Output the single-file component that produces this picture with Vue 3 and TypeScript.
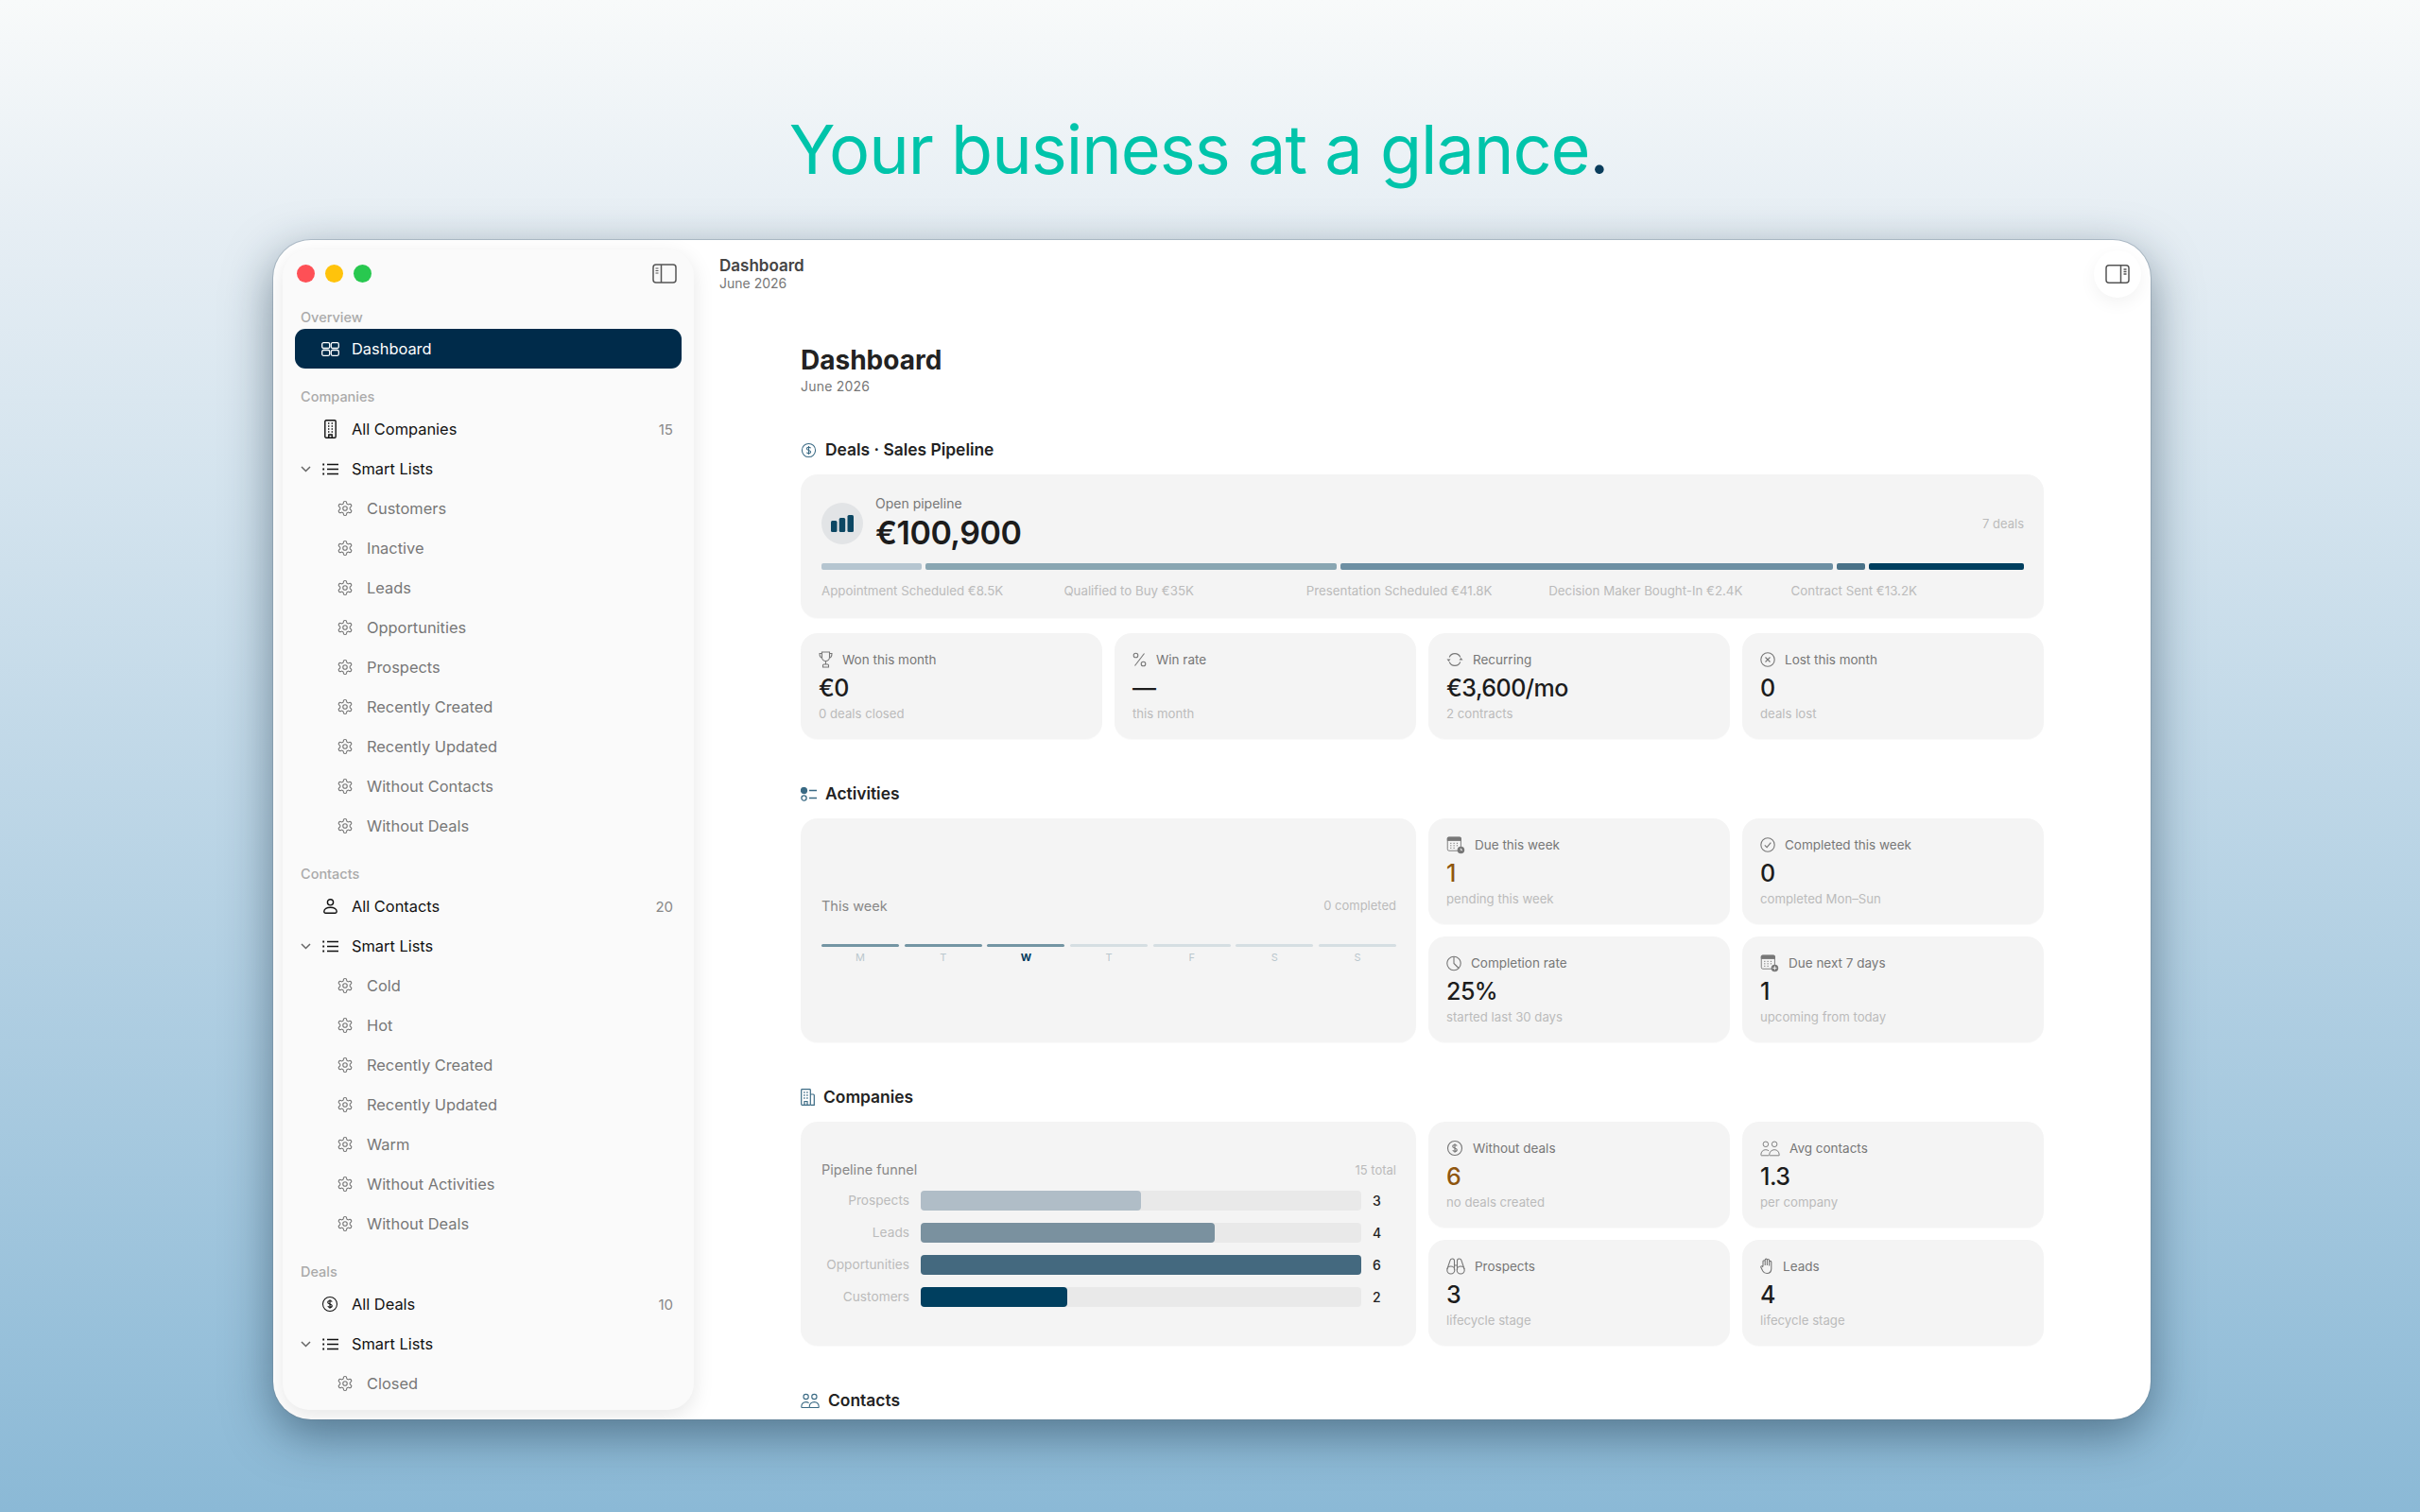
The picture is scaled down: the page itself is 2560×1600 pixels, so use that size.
<script setup lang="ts">
interface Icon { w: number; h: number; vb: string; body: string }

const gearPath = 'M12.22 2h-.44a2 2 0 0 0-2 2v.18a2 2 0 0 1-1 1.73l-.43.25a2 2 0 0 1-2 0l-.15-.08a2 2 0 0 0-2.73.73l-.22.38a2 2 0 0 0 .73 2.73l.15.1a2 2 0 0 1 1 1.72v.51a2 2 0 0 1-1 1.74l-.15.09a2 2 0 0 0-.73 2.73l.22.38a2 2 0 0 0 2.73.73l.15-.08a2 2 0 0 1 2 0l.43.25a2 2 0 0 1 1 1.73V20a2 2 0 0 0 2 2h.44a2 2 0 0 0 2-2v-.18a2 2 0 0 1 1-1.73l.43-.25a2 2 0 0 1 2 0l.15.08a2 2 0 0 0 2.73-.73l.22-.39a2 2 0 0 0-.73-2.73l-.15-.08a2 2 0 0 1-1-1.74v-.5a2 2 0 0 1 1-1.74l.15-.09a2 2 0 0 0 .73-2.73l-.22-.38a2 2 0 0 0-2.73-.73l-.15.08a2 2 0 0 1-2 0l-.43-.25a2 2 0 0 1-1-1.73V4a2 2 0 0 0-2-2z'

const dollarBody = '<circle cx="12" cy="12" r="10"/><path d="M15 8.8c-.5-1-1.600-1.500-3-1.500-1.700 0-3 .9-3 2.300 0 3.100 6 1.600 6 4.700 0 1.400-1.300 2.300-3 2.300-1.400 0-2.500-.5-3-1.500M12 5.800v12.400" stroke-width="1.500"/>'
const usersBody = '<circle cx="7" cy="5" r="3.300"/><circle cx="18" cy="5" r="3.300"/><path d="M1 18.500c0-4 2.500-6.500 6-6.500 1.500 0 2.800.5 3.800 1.300M24 18.500c0-4-2.500-6.500-6-6.500-3.500 0-6.500 2.500-6.500 6.500 0 .5.300.8.8.8h11.400c.5 0 .3-.3.300-.8zM1 18.500c0 .5.300.8.8.8H11"/>'
const calendarBase = '<rect x="1.500" y="2.500" width="17" height="17" rx="2"/><path d="M1.500 3.500a1 1 0 0 1 1-1h15a1 1 0 0 1 1 1v3h-17z" fill="currentColor"/><path d="M5 10h1.500M9 10h1.500M13 10h1.500M5 13h1.500M9 13h1.500M13 13h1.500M5 16h1.500M9 16h1.500" stroke-width="1.200"/>'

const icons: Record<string, Icon> = {
  grid: { w: 19, h: 15, vb: '0 0 19 15', body: '<rect x=".7" y=".7" width="8" height="5.800" rx="1.500"/><rect x="10.300" y=".7" width="8" height="5.800" rx="1.500"/><rect x=".7" y="8.500" width="8" height="5.800" rx="1.500"/><rect x="10.300" y="8.500" width="8" height="5.800" rx="1.500"/>' },
  building: { w: 13, h: 20, vb: '0 0 13 20', body: '<rect x=".8" y=".8" width="11.400" height="18.400" rx="1.200"/><path d="M4 4h1.400M7.600 4H9M4 7h1.400M7.600 7H9M4 10h1.400M7.600 10H9M4 13h1.400M7.600 13H9" stroke-width="1.500"/><path d="M4.800 19v-3h3.400v3"/>' },
  list: { w: 17, h: 13, vb: '0 0 17 13', body: '<path d="M5 1.500h12M5 6.500h12M5 11.500h12"/><path d="M.3 1.500h1.800M.3 6.500h1.800M.3 11.500h1.800" stroke-width="2"/>' },
  person: { w: 15, h: 16, vb: '0 0 15 16', body: '<circle cx="7.500" cy="3.800" r="3.100"/><path d="M.8 13.500c0-2.600 2.900-4.300 6.700-4.300s6.700 1.700 6.700 4.300c0 1-.6 1.700-1.600 1.700H2.400c-1 0-1.600-.7-1.600-1.700z"/>' },
  dollar: { w: 18, h: 18, vb: '0 0 24 24', body: dollarBody },
  gear: { w: 18, h: 18, vb: '0 0 24 24', body: `<path d="${gearPath}"/><circle cx="12" cy="12" r="3"/>` },
  chevron: { w: 11, h: 7, vb: '0 0 11 7', body: '<path d="M1 1l4.500 4.500L10 1"/>' },
  trophy: { w: 15, h: 18, vb: '0 0 15 18', body: '<path d="M3.500 1h8v5.500a4 4 0 0 1-8 0zM3.500 2.500H1c0 3 1 4.500 3 5M11.500 2.500H14c0 3-1 4.500-3 5M7.500 10.500v3.500M4.500 17h6v-2a1 1 0 0 0-1-1h-4a1 1 0 0 0-1 1z"/>' },
  percent: { w: 15, h: 16, vb: '0 0 15 16', body: '<path d="M12.500 1.500L2.500 14.500"/><circle cx="3.500" cy="3.500" r="2.300"/><circle cx="11.500" cy="12.500" r="2.300"/>' },
  refresh: { w: 18, h: 16, vb: '0 0 18 16', body: '<path d="M3.200 5.500A6.300 6.300 0 0 1 14.800 5.500M14.800 10.500A6.300 6.300 0 0 1 3.200 10.500"/><path d="M.5 7.500h4l-2 2.500zM13.500 8.500h4l-2-2.500z" fill="currentColor" stroke="none"/>' },
  xcircle: { w: 16, h: 16, vb: '0 0 16 16', body: '<circle cx="8" cy="8" r="7.200"/><path d="M5.500 5.500l5 5M10.500 5.500l-5 5"/>' },
  caldue: { w: 20, h: 20, vb: '0 0 24 24', body: `${calendarBase}<circle cx="18.500" cy="18.500" r="4.500" fill="currentColor" stroke="none"/><path d="M18.500 16.500v2.200h1.800" stroke="#f4f4f4"/>` },
  calnext: { w: 20, h: 20, vb: '0 0 24 24', body: `${calendarBase}<circle cx="18.500" cy="18.500" r="4.500" fill="currentColor" stroke="none"/><path d="M18.500 16v5M16 18.500h5" stroke="#f4f4f4"/>` },
  check: { w: 16, h: 16, vb: '0 0 16 16', body: '<circle cx="8" cy="8" r="7.200"/><path d="M4.800 8.300l2.300 2.400 4.200-5"/>' },
  pie: { w: 16, h: 17, vb: '0 0 16 17', body: '<circle cx="8" cy="8.500" r="7.200"/><path d="M8 1.300v7.200l5 5"/>' },
  users: { w: 21, h: 18, vb: '0 0 25 20', body: usersBody },
  binoculars: { w: 20, h: 18, vb: '0 0 20 18', body: '<circle cx="4.800" cy="13" r="4"/><circle cx="15.200" cy="13" r="4"/><path d="M.9 12L4 3a2 2 0 0 1 4.500.5V13M19.100 12L16 3a2 2 0 0 0-4.500.5V13M8.500 8h3"/>' },
  hand: { w: 14, h: 18, vb: '0 0 14 18', body: '<path d="M3 9V3.800a1.100 1.100 0 0 1 2.200 0V8M5.200 8V2.200a1.100 1.100 0 0 1 2.200 0V8M7.400 8V2.600a1.100 1.100 0 0 1 2.200 0V8.500M9.600 8.500V4.500a1.100 1.100 0 0 1 2.200 0V11.500c0 3-1.900 5-4.800 5-2.300 0-3.400-1-4.200-2.500L.9 10.200c-.6-1.200.9-2 1.600-1L3 10"/>' },
  tasks: { w: 17, h: 15, vb: '0 0 17 15', body: '<circle cx="3.500" cy="3.500" r="3" fill="currentColor"/><circle cx="3.500" cy="11.500" r="2.600"/><path d="M9 3.500h8M9 11.500h8"/>' },
  office: { w: 15, h: 18, vb: '0 0 15 18', body: '<rect x=".7" y=".7" width="9.600" height="16.600" rx=".8"/><path d="M10.300 6h3a1 1 0 0 1 1 1v10.300h-4"/><path d="M3.200 4h1.400M6.200 4h1.400M3.200 7h1.400M6.200 7h1.400M3.200 10h1.400M6.200 10h1.400" stroke-width="1.400"/><path d="M4 17v-3.500h3V17"/>' },
}

interface Row { label: string; icon?: string; count?: number; kind: 'top' | 'smart' | 'sub' }

const smart = (items: string[]): Row[] => [
  { label: 'Smart Lists', icon: 'list', kind: 'smart' },
  ...items.map((label): Row => ({ label, icon: 'gear', kind: 'sub' })),
]

const groups: { title: string; rows: Row[] }[] = [
  {
    title: 'Companies',
    rows: [
      { label: 'All Companies', icon: 'building', count: 15, kind: 'top' },
      ...smart(['Customers', 'Inactive', 'Leads', 'Opportunities', 'Prospects', 'Recently Created', 'Recently Updated', 'Without Contacts', 'Without Deals']),
    ],
  },
  {
    title: 'Contacts',
    rows: [
      { label: 'All Contacts', icon: 'person', count: 20, kind: 'top' },
      ...smart(['Cold', 'Hot', 'Recently Created', 'Recently Updated', 'Warm', 'Without Activities', 'Without Deals']),
    ],
  },
  {
    title: 'Deals',
    rows: [
      { label: 'All Deals', icon: 'dollar', count: 10, kind: 'top' },
      ...smart(['Closed']),
    ],
  },
]

interface Stat { icon: string; label: string; value: string; sub: string; warn?: boolean }

const dealStats: Stat[] = [
  { icon: 'trophy', label: 'Won this month', value: '€0', sub: '0 deals closed' },
  { icon: 'percent', label: 'Win rate', value: '—', sub: 'this month' },
  { icon: 'refresh', label: 'Recurring', value: '€3,600/mo', sub: '2 contracts' },
  { icon: 'xcircle', label: 'Lost this month', value: '0', sub: 'deals lost' },
]

const activityStats: Stat[] = [
  { icon: 'caldue', label: 'Due this week', value: '1', sub: 'pending this week', warn: true },
  { icon: 'check', label: 'Completed this week', value: '0', sub: 'completed Mon–Sun' },
  { icon: 'pie', label: 'Completion rate', value: '25%', sub: 'started last 30 days' },
  { icon: 'calnext', label: 'Due next 7 days', value: '1', sub: 'upcoming from today' },
]

const companyStats: Stat[] = [
  { icon: 'dollar', label: 'Without deals', value: '6', sub: 'no deals created', warn: true },
  { icon: 'users', label: 'Avg contacts', value: '1.3', sub: 'per company' },
  { icon: 'binoculars', label: 'Prospects', value: '3', sub: 'lifecycle stage' },
  { icon: 'hand', label: 'Leads', value: '4', sub: 'lifecycle stage' },
]

const pipeline = [
  { label: 'Appointment Scheduled €8.5K', amount: 8.5, color: '#b5c5d0' },
  { label: 'Qualified to Buy €35K', amount: 35, color: '#89a6b2' },
  { label: 'Presentation Scheduled €41.8K', amount: 41.8, color: '#6d8fa3' },
  { label: 'Decision Maker Bought-In €2.4K', amount: 2.4, color: '#4a7288' },
  { label: 'Contract Sent €13.2K', amount: 13.2, color: '#003f5f' },
]

const week = [
  { day: 'M', past: true },
  { day: 'T', past: true },
  { day: 'W', past: true, today: true },
  { day: 'T' },
  { day: 'F' },
  { day: 'S' },
  { day: 'S' },
]

const funnel = [
  { label: 'Prospects', count: 3, color: '#b0bdc7' },
  { label: 'Leads', count: 4, color: '#7a919f' },
  { label: 'Opportunities', count: 6, color: '#44697f' },
  { label: 'Customers', count: 2, color: '#003f5f' },
]
</script>

<template>
  <div class="page">
    <h1 class="headline">Your business at a glance<span class="dot">.</span></h1>

    <div class="window">
      <aside class="sidebar">
        <div class="side-top">
          <div class="lights">
            <span class="light red"></span>
            <span class="light yellow"></span>
            <span class="light green"></span>
          </div>
          <svg class="panel-icon" width="26" height="21" viewBox="0 0 26 21" fill="none" stroke="currentColor" stroke-width="1.500">
            <rect x="1" y="1" width="24" height="19" rx="3" />
            <path d="M9.500 1v19" />
            <path d="M3.500 5h3M3.500 7.500h3M3.500 10h3" stroke-width="1.200" />
          </svg>
        </div>

        <div class="side-label first">Overview</div>
        <div class="row active">
          <span class="chev-slot"></span>
          <span class="icon-slot">
            <svg :width="icons.grid.w" :height="icons.grid.h" :viewBox="icons.grid.vb" fill="none" stroke="currentColor" stroke-width="1.300" v-html="icons.grid.body"></svg>
          </span>
          <span>Dashboard</span>
        </div>

        <template v-for="g in groups" :key="g.title">
          <div class="side-label">{{ g.title }}</div>
          <div v-for="r in g.rows" :key="r.label" class="row" :class="r.kind">
            <template v-if="r.kind === 'sub'">
              <svg class="gear" width="18" height="18" viewBox="0 0 24 24" fill="none" stroke="currentColor" stroke-width="1.500" v-html="icons.gear.body"></svg>
              <span>{{ r.label }}</span>
            </template>
            <template v-else>
              <span class="chev-slot">
                <svg v-if="r.kind === 'smart'" class="chev" width="11" height="7" viewBox="0 0 11 7" fill="none" stroke="currentColor" stroke-width="1.500" v-html="icons.chevron.body"></svg>
              </span>
              <span class="icon-slot">
                <svg :width="icons[r.icon!].w" :height="icons[r.icon!].h" :viewBox="icons[r.icon!].vb" fill="none" stroke="currentColor" stroke-width="1.400" v-html="icons[r.icon!].body"></svg>
              </span>
              <span>{{ r.label }}</span>
              <span v-if="r.count" class="count">{{ r.count }}</span>
            </template>
          </div>
        </template>
      </aside>

      <main class="main">
        <div class="main-top">
          <div class="top-title">Dashboard</div>
          <div class="top-sub">June 2026</div>
        </div>

        <div class="inspector">
          <svg width="26" height="20" viewBox="0 0 26 20" fill="none" stroke="currentColor" stroke-width="1.500">
            <rect x="1" y=".8" width="24" height="18.400" rx="3" />
            <path d="M16.500 1v18" />
            <path d="M19.500 5h3M19.500 7.500h3M19.500 10h3" stroke-width="1.300" />
          </svg>
        </div>

        <div class="content">
          <h2 class="page-title">Dashboard</h2>
          <div class="page-sub">June 2026</div>

          <section class="section">
            <h3 class="sec-head">
              <svg width="17" height="17" viewBox="0 0 24 24" fill="none" stroke="currentColor" stroke-width="1.500" v-html="icons.dollar.body"></svg>
              Deals · Sales Pipeline
            </h3>
            <div class="card pipeline">
              <div class="pipe-top">
                <span class="pipe-badge">
                  <svg width="24" height="18" viewBox="0 0 24 18" fill="#0c4763">
                    <rect x="0" y="6" width="6.500" height="12" rx="1.500" />
                    <rect x="8.700" y="3" width="6.500" height="15" rx="1.500" />
                    <rect x="17.500" y="0" width="6.500" height="18" rx="1.500" />
                  </svg>
                </span>
                <div class="pipe-text">
                  <div class="pipe-label">Open pipeline</div>
                  <div class="pipe-value">€100,900</div>
                </div>
                <span class="pipe-deals">7 deals</span>
              </div>
              <div class="pipe-bar">
                <span v-for="p in pipeline" :key="p.label" class="seg" :style="{ flexGrow: p.amount, background: p.color }"></span>
              </div>
              <div class="pipe-legend">
                <span v-for="p in pipeline" :key="p.label">{{ p.label }}</span>
              </div>
            </div>
            <div class="stats-row">
              <div v-for="s in dealStats" :key="s.label" class="card stat">
                <div class="stat-label">
                  <svg :width="icons[s.icon].w" :height="icons[s.icon].h" :viewBox="icons[s.icon].vb" fill="none" stroke="currentColor" stroke-width="1.100" v-html="icons[s.icon].body"></svg>
                  {{ s.label }}
                </div>
                <div class="stat-value">{{ s.value }}</div>
                <div class="stat-sub">{{ s.sub }}</div>
              </div>
            </div>
          </section>

          <section class="section">
            <h3 class="sec-head">
              <svg width="17" height="15" viewBox="0 0 17 15" fill="none" stroke="currentColor" stroke-width="1.300" v-html="icons.tasks.body"></svg>
              Activities
            </h3>
            <div class="split">
              <div class="card panel">
                <div class="panel-head">
                  <span class="panel-title">This week</span>
                  <span class="panel-note">0 completed</span>
                </div>
                <div class="week">
                  <div v-for="(d, i) in week" :key="i" class="day" :class="{ today: d.today }">
                    <span class="day-bar" :class="{ past: d.past }"></span>
                    <span class="day-name">{{ d.day }}</span>
                  </div>
                </div>
              </div>
              <div v-for="s in activityStats" :key="s.label" class="card stat">
                <div class="stat-label">
                  <svg :width="icons[s.icon].w" :height="icons[s.icon].h" :viewBox="icons[s.icon].vb" fill="none" stroke="currentColor" stroke-width="1.100" v-html="icons[s.icon].body"></svg>
                  {{ s.label }}
                </div>
                <div class="stat-value" :class="{ warn: s.warn }">{{ s.value }}</div>
                <div class="stat-sub">{{ s.sub }}</div>
              </div>
            </div>
          </section>

          <section class="section">
            <h3 class="sec-head">
              <svg width="15" height="18" viewBox="0 0 15 18" fill="none" stroke="currentColor" stroke-width="1.200" v-html="icons.office.body"></svg>
              Companies
            </h3>
            <div class="split">
              <div class="card panel">
                <div class="panel-head funnel-head">
                  <span class="panel-title">Pipeline funnel</span>
                  <span class="panel-note">15 total</span>
                </div>
                <div class="funnel">
                  <div v-for="f in funnel" :key="f.label" class="funnel-row">
                    <span class="funnel-label">{{ f.label }}</span>
                    <span class="track">
                      <span class="fill" :style="{ width: (f.count / 6) * 100 + '%', background: f.color }"></span>
                    </span>
                    <span class="funnel-count">{{ f.count }}</span>
                  </div>
                </div>
              </div>
              <div v-for="s in companyStats" :key="s.label" class="card stat">
                <div class="stat-label">
                  <svg :width="icons[s.icon].w" :height="icons[s.icon].h" :viewBox="icons[s.icon].vb" fill="none" stroke="currentColor" :stroke-width="s.icon === 'dollar' ? 1.500 : 1.100" v-html="icons[s.icon].body"></svg>
                  {{ s.label }}
                </div>
                <div class="stat-value" :class="{ warn: s.warn }">{{ s.value }}</div>
                <div class="stat-sub">{{ s.sub }}</div>
              </div>
            </div>
          </section>

          <section class="section">
            <h3 class="sec-head">
              <svg width="20" height="16" viewBox="0 0 25 20" fill="none" stroke="currentColor" stroke-width="1.400" v-html="icons.users.body"></svg>
              Contacts
            </h3>
          </section>
        </div>
      </main>
    </div>
  </div>
</template>

<style>
html,
body {
  margin: 0;
  background: #8bb9d6;
}
</style>

<style scoped>
.page {
  width: 2560px;
  height: 1600px;
  overflow: hidden;
  box-sizing: border-box;
  padding-left: 289px;
  background: linear-gradient(180deg, #f8fafa 0%, #e6eef4 15%, #8bb9d6 100%);
  font-family: Inter, "Noto Sans", sans-serif;
}

.headline {
  width: 1986px;
  height: 254px;
  margin: 0;
  box-sizing: border-box;
  padding: 112px 28px 0 0;
  text-align: center;
  font-size: 72px;
  line-height: 92px;
  font-weight: 400;
  letter-spacing: -1px;
  color: #00c4aa;
}

.dot {
  color: #0a3d5c;
}

.window {
  position: relative;
  display: flex;
  width: 1986px;
  height: 1248px;
  overflow: hidden;
  border-radius: 40px;
  background: #fff;
  box-shadow: 0 0 0 1px rgba(110, 130, 145, 0.35), 0 16px 50px rgba(20, 45, 65, 0.5);
}

.sidebar {
  flex: none;
  width: 435px;
  height: 1228px;
  margin: 10px 0 10px 10px;
  box-sizing: border-box;
  padding: 0 13px;
  overflow: hidden;
  border-radius: 28px;
  background: #fafafa;
  box-shadow: 0 6px 22px rgba(0, 0, 0, 0.1);
}

.side-top {
  display: flex;
  align-items: center;
  justify-content: space-between;
  height: 50px;
  padding: 0 5px 0 2px;
}

.lights {
  display: flex;
  gap: 11px;
}

.light {
  width: 19px;
  height: 19px;
  border-radius: 50%;
}

.red { background: #fe5056; }
.yellow { background: #ffc30b; }
.green { background: #28c84f; }

.panel-icon {
  color: #555;
}

.side-label {
  height: 18px;
  margin-top: 21px;
  margin-bottom: 4px;
  padding-left: 6px;
  font-size: 14.500px;
  line-height: 18px;
  font-weight: 500;
  color: #aaa;
}

.side-label.first {
  margin-top: 13px;
  margin-bottom: 3px;
}

.row {
  display: flex;
  align-items: center;
  height: 42px;
  font-size: 16.400px;
  color: #111;
}

.row.active {
  border-radius: 11px;
  background: #002b4a;
  color: #fff;
}

.chev-slot {
  display: flex;
  justify-content: center;
  flex: none;
  width: 22px;
}

.chev {
  color: #666;
}

.icon-slot {
  display: flex;
  justify-content: center;
  align-items: center;
  flex: none;
  width: 30px;
  margin-right: 8px;
}

.row.sub {
  padding-left: 44px;
  color: #777;
}

.gear {
  flex: none;
  margin-right: 14px;
}

.count {
  margin-left: auto;
  padding-right: 9px;
  font-size: 15px;
  color: #888;
}

.main {
  flex: 1;
  min-width: 0;
}

.main-top {
  padding: 17px 0 0 27px;
}

.top-title {
  font-size: 17px;
  line-height: 20px;
  font-weight: 600;
  color: #444;
}

.top-sub {
  font-size: 14px;
  line-height: 18px;
  color: #777;
}

.inspector {
  position: absolute;
  top: 11px;
  right: 10px;
  display: flex;
  align-items: center;
  justify-content: center;
  width: 50px;
  height: 50px;
  border-radius: 50%;
  background: #fff;
  color: #555;
  box-shadow: 0 6px 18px rgba(0, 0, 0, 0.05);
}

.content {
  width: 1315px;
  margin-left: 113px;
}

.page-title {
  margin: 54px 0 0;
  font-size: 28px;
  line-height: 36px;
  font-weight: 700;
  color: #222;
}

.page-sub {
  margin-top: 1px;
  font-size: 14px;
  letter-spacing: 0.2px;
  line-height: 18px;
  color: #777;
}

.section {
  margin-top: 48px;
}

.sec-head {
  display: flex;
  align-items: center;
  gap: 9px;
  height: 20px;
  margin: 0 0 16px;
  font-size: 17.400px;
  line-height: 20px;
  font-weight: 600;
  color: #222;
}

.sec-head svg {
  flex: none;
  color: #3a6a84;
}

.card {
  box-sizing: border-box;
  border-radius: 18px;
  background: #f4f4f4;
  box-shadow: 0 1px 1px rgba(0, 0, 0, 0.025);
}

.pipeline {
  height: 152px;
  padding: 23px 21px 0 22px;
}

.pipe-top {
  display: flex;
  align-items: center;
  height: 57px;
}

.pipe-badge {
  display: flex;
  align-items: center;
  justify-content: center;
  flex: none;
  width: 44px;
  height: 44px;
  margin-right: 13px;
  border-radius: 50%;
  background: #e2e4e6;
}

.pipe-label {
  font-size: 14px;
  line-height: 16px;
  color: #777;
}

.pipe-value {
  margin-top: 5px;
  font-size: 34px;
  letter-spacing: -0.500px;
  line-height: 36px;
  font-weight: 600;
  color: #1c1c1c;
}

.pipe-deals {
  margin-left: auto;
  font-size: 13px;
  color: #bbb;
}

.pipe-bar {
  display: flex;
  gap: 4px;
  height: 7px;
  margin-top: 14px;
}

.seg {
  flex: 1 1 0;
  border-radius: 2px;
}

.pipe-legend {
  display: grid;
  grid-template-columns: repeat(5, 1fr);
  gap: 10px;
  margin-top: 14px;
  font-size: 13.300px;
  line-height: 16px;
  color: #bbb;
  white-space: nowrap;
}

.stats-row {
  display: grid;
  grid-template-columns: repeat(4, 1fr);
  gap: 13px;
  margin-top: 16px;
}

.stat {
  height: 112px;
  padding: 19px 19px 0;
}

.stat-label {
  display: flex;
  align-items: center;
  gap: 10px;
  height: 18px;
  font-size: 13.500px;
  line-height: 18px;
  color: #777;
}

.stat-label svg {
  flex: none;
}

.stat-value {
  margin-top: 5px;
  font-size: 25px;
  letter-spacing: -0.500px;
  line-height: 32px;
  font-weight: 500;
  color: #1c1c1c;
}

.stat-value.warn {
  color: #8f560e;
}

.stat-sub {
  margin-top: 3px;
  font-size: 13.200px;
  line-height: 16px;
  color: #bbb;
}

.split {
  display: grid;
  grid-template-columns: repeat(4, 1fr);
  grid-template-rows: 112px 112px;
  gap: 13px;
}

.panel {
  grid-column: 1 / span 2;
  grid-row: 1 / span 2;
  display: flex;
  flex-direction: column;
  justify-content: center;
  padding: 0 21px 0 22px;
}

.panel-head {
  display: flex;
  align-items: center;
  justify-content: space-between;
  height: 18px;
}

.panel-title {
  font-size: 14.500px;
  color: #888;
}

.panel-note {
  font-size: 13px;
  color: #bbb;
}

.week {
  display: grid;
  grid-template-columns: repeat(7, 1fr);
  gap: 5.500px;
  margin-top: 32px;
}

.day {
  display: flex;
  flex-direction: column;
  align-items: center;
  gap: 4px;
  font-size: 11px;
  line-height: 14px;
  color: #bac7cd;
}

.day.today {
  font-weight: 700;
  color: #003a5c;
}

.day-bar {
  width: 100%;
  height: 3px;
  border-radius: 2px;
  background: #d5dee2;
}

.day-bar.past {
  background: #7395a3;
}

.funnel-head {
  margin-bottom: 13px;
}

.funnel {
  display: flex;
  flex-direction: column;
  gap: 13px;
}

.funnel-row {
  display: flex;
  align-items: center;
  height: 21px;
}

.funnel-label {
  flex: none;
  width: 93px;
  margin-right: 12px;
  text-align: right;
  font-size: 13.700px;
  color: #bbb;
}

.track {
  display: block;
  flex: none;
  width: 466px;
  height: 21px;
  border-radius: 4px;
  background: #e9e9e9;
}

.fill {
  display: block;
  height: 100%;
  border-radius: 4px;
}

.funnel-count {
  margin-left: 12px;
  font-size: 14px;
  font-weight: 500;
  color: #222;
}
</style>
